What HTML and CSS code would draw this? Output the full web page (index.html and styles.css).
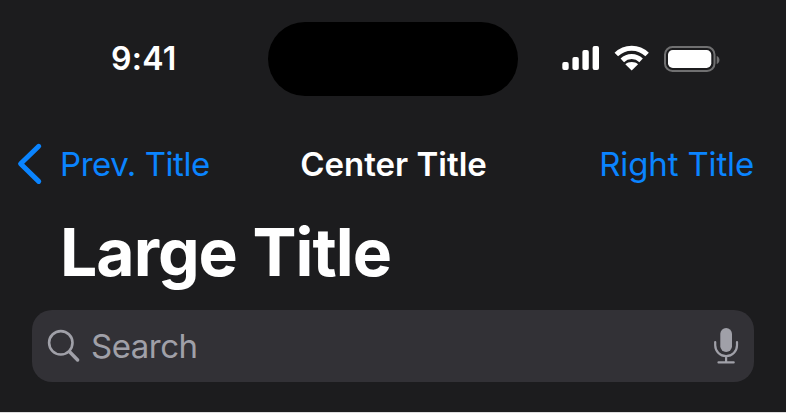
FILE: index.html
```html
<!DOCTYPE html>
<html lang="en">
<head>
<meta charset="utf-8">
<title>Large Title</title>
<link rel="stylesheet" href="styles.css">
</head>
<body>
<div class="screen">
  <div class="status-bar">
    <span class="time">9:41</span>
    <div class="island"></div>
    <svg class="status-icons" viewBox="562 42 160 34" width="160" height="34">
      <g fill="#fff">
        <rect x="562.3" y="62" width="6.4" height="8" rx="1.9"/>
        <rect x="572.4" y="57" width="6.4" height="13" rx="1.9"/>
        <rect x="582.4" y="50" width="6.4" height="20" rx="1.9"/>
        <rect x="592.6" y="46" width="6.4" height="24" rx="1.9"/>
        <path d="M631.7 62 C634.3 62 636.5 62.9 638.1 64.3 L631.7 70.5 L625.3 64.3 C626.9 62.9 629.1 62 631.7 62Z"/>
      </g>
      <path d="M616.3 54.5 A22 22 0 0 1 647.1 54.5 M622.3 60.4 A13.5 13.5 0 0 1 641.1 60.4" fill="none" stroke="#fff" stroke-width="5"/>
      <rect x="665" y="47" width="49.5" height="24" rx="7.5" fill="none" stroke="#707071" stroke-width="2"/>
      <rect x="668" y="50" width="43.3" height="18" rx="4.8" fill="#fff"/>
      <path d="M716.7 56 C718.3 56.6 719.5 58.2 719.5 60 C719.5 61.9 718.3 63.5 716.7 64.1Z" fill="#707071"/>
    </svg>
  </div>
  <div class="nav-bar">
    <a class="back"><svg class="chevron" viewBox="16 142 28 44" width="28" height="44"><path d="M38.7 146.3 L20.6 163.8 L38.7 181.4" fill="none" stroke="#0a84ff" stroke-width="5" stroke-linecap="round" stroke-linejoin="round"/></svg><span class="back-label">Prev. Title</span></a>
    <span class="center-title">Center Title</span>
    <a class="right-title">Right Title</a>
  </div>
  <h1 class="large-title">Large Title</h1>
  <div class="search">
    <svg class="lens" viewBox="46 328 36 36" width="36" height="36" fill="none" stroke="#a0a0a8" stroke-linecap="round"><circle cx="60.8" cy="342.8" r="11.7" stroke-width="2.6"/><path d="M69.8 352 L77.6 360" stroke-width="3.5"/></svg>
    <span class="placeholder">Search</span>
    <svg class="mic" viewBox="712 326 28 40" width="28" height="40" fill="none" stroke="#a0a0a8" stroke-width="2.2" stroke-linecap="round"><rect x="720.3" y="328" width="11.7" height="24" rx="5.85" fill="#a0a0a8" stroke="none"/><path d="M715.2 342 V345.3 A10.9 10.9 0 0 0 737 345.3 V342 M726.1 356.6 V362 M718.5 362.4 H733.7"/></svg>
  </div>
</div>
</body>
</html>
```
FILE: styles.css
```css
* { box-sizing: border-box; }
body {
  margin: 0;
  background: #1c1c1e;
  color: #fff;
  font-family: Inter, sans-serif;
}
.screen {
  display: flex;
  flex-direction: column;
  height: 413px;
  border-bottom: 1px solid #dededf;
  white-space: nowrap;
}
.status-bar {
  display: grid;
  grid-template-columns: 268px 250px 1fr;
  align-items: center;
  height: 118px;
}
.time {
  padding-left: 111px;
  font-size: 32px;
  font-weight: 600;
  line-height: 40px;
  letter-spacing: 0.3px;
}
.island {
  height: 74px;
  border-radius: 37px;
  background: #000;
}
.status-icons { margin-left: 44px; }
.nav-bar {
  display: grid;
  grid-template-columns: 1fr auto 1fr;
  align-items: center;
  height: 92px;
  padding: 0 32px;
  font-size: 33px;
  line-height: 44px;
}
.back, .right-title { color: #0a84ff; }
.back {
  display: flex;
  align-items: center;
  margin-left: -16px;
}
.back-label {
  margin-left: 16px;
  letter-spacing: -0.45px;
}
.center-title {
  padding-left: 1px;
  font-weight: 600;
}
.right-title {
  justify-self: end;
  letter-spacing: -0.15px;
}
.large-title {
  margin: 0;
  padding-left: 60px;
  height: 100px;
  font-size: 66px;
  font-weight: 700;
  line-height: 84px;
  letter-spacing: -1px;
  word-spacing: 1px;
}
.search {
  display: flex;
  align-items: center;
  height: 72px;
  margin: 0 32px;
  padding: 0 14px;
  border-radius: 20px;
  background: #323136;
  color: #a0a0a8;
}
.placeholder {
  flex: 1;
  margin-left: 9px;
  font-size: 33px;
  line-height: 44px;
  letter-spacing: -0.5px;
}
svg { display: block; flex: none; }
```
